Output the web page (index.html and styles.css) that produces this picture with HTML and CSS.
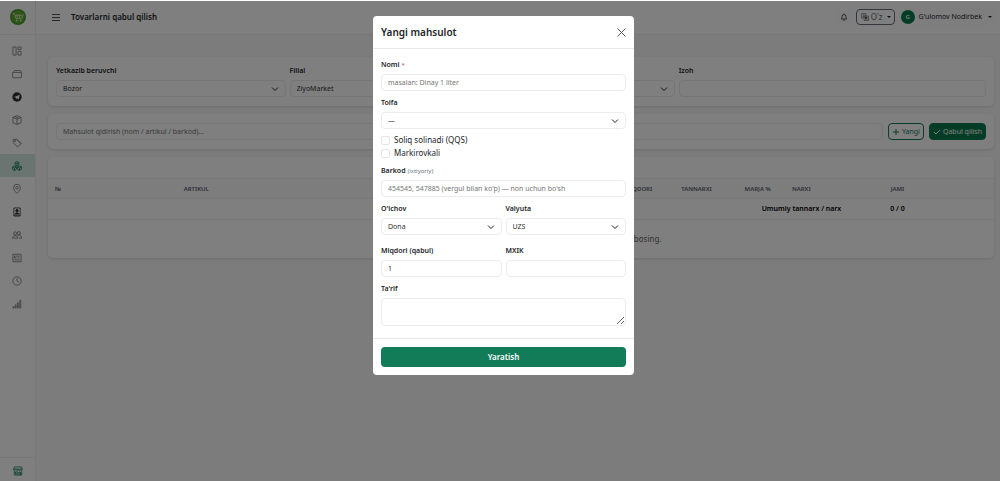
FILE: index.html
```html
<!DOCTYPE html>
<html lang="uz">
<head>
<meta charset="utf-8">
<meta name="viewport" content="width=device-width, initial-scale=1">
<title>Tovarlarni qabul qilish</title>
<link rel="stylesheet" href="styles.css">
</head>
<body>
<div class="app">
  <aside class="sidebar">
    <a class="logo" href="#" aria-label="ZiyoMarket">
      <svg viewBox="0 0 16 16"><circle cx="8" cy="8" r="8" fill="#4a9a28"/><circle cx="8" cy="8" r="6.400" fill="#62ad38"/><path d="M2.500 4.500h2l1.400 5h5.800l1.600-4.200M5.200 6.700h7M7.200 5v4M9.600 5v4" fill="none" stroke="#dcebb8" stroke-width=".8"/><circle cx="6.700" cy="11.500" r=".9" fill="#dcebb8"/><circle cx="10.700" cy="11.500" r=".9" fill="#dcebb8"/></svg>
    </a>
    <nav class="nav">
      <a href="#" aria-label="Boshqaruv"><svg viewBox="0 0 16 16"><path d="M1.500 1.500h5v13h-5zM9.500 1.500h5v4h-5zM9.500 8.500h5v6h-5z"/></svg></a>
      <a href="#" aria-label="Kassa"><svg viewBox="0 0 16 16"><path d="M1 5.500h14v7.500q0 1-1 1H2q-1 0-1-1zM2.500 5.500 4 2.500h9.500l1.500 3"/></svg></a>
      <a href="#" aria-label="Telegram" class="dark"><svg viewBox="0 0 16 16"><circle cx="8" cy="8" r="7.500" fill="currentColor" stroke="none"/><path d="m3.500 7.800 8.800-3.500-1.500 7.700-2.600-1.900-1.300 1.400-.4-2.400z" fill="#fff" stroke="none"/></svg></a>
      <a href="#" aria-label="Mahsulotlar"><svg viewBox="0 0 16 16"><path d="m8 1 6.500 2.700v8.600L8 15l-6.500-2.700V3.700zM1.500 3.700 8 6.500l6.500-2.800M8 6.500V15M4.700 2.400l6.500 2.800"/></svg></a>
      <a href="#" aria-label="Narxlar"><svg viewBox="0 0 16 16"><path d="M2 2h5.500l7 7-5.500 5.500-7-7zM7.500 2 15 9.500"/><circle cx="5" cy="5" r="1"/></svg></a>
      <a href="#" aria-label="Qabul qilish" class="active"><svg viewBox="0 0 16 16"><path d="m8 1 3 1.500v4L8 8 5 6.500v-4zM4 8l3 1.500v4L4 15l-3-1.500v-4zM12 8l3 1.500v4L12 15l-3-1.500v-4zM5 2.500 8 4l3-1.500M8 4v4M1 9.500 4 11l3-1.500M4 11v4M9 9.500l3 1.500 3-1.500M12 11v4"/></svg></a>
      <a href="#" aria-label="Filiallar"><svg viewBox="0 0 16 16"><path d="M8 15S2.500 10.500 2.500 6a5.500 5.500 0 0 1 11 0C13.500 10.500 8 15 8 15z"/><circle cx="8" cy="6" r="2"/></svg></a>
      <a href="#" aria-label="Xodimlar" class="dark"><svg viewBox="0 0 16 16"><path d="M3 1.500h10v13H3zM3 13h10"/><circle cx="8" cy="6" r="2" fill="currentColor"/><path d="M5 11q3-4 6 0z" fill="currentColor"/></svg></a>
      <a href="#" aria-label="Mijozlar"><svg viewBox="0 0 16 16"><circle cx="5" cy="5.500" r="2.500"/><circle cx="11" cy="5" r="2.500"/><path d="M.8 13q0-4 4.200-4t4.200 4zM9 8.500q6-1.500 6.300 4.500H11"/></svg></a>
      <a href="#" aria-label="Hisobotlar"><svg viewBox="0 0 16 16"><path d="M1.500 2h13v12h-13zM4 5h8M4 8h3M9 8h3M4 11h8M4 5v3"/></svg></a>
      <a href="#" aria-label="Tarix"><svg viewBox="0 0 16 16"><circle cx="8" cy="8" r="6.700"/><path d="M8 3.500V8l3 2"/></svg></a>
      <a href="#" aria-label="Statistika"><svg viewBox="0 0 16 16"><path d="M1.500 12.500h1.500v2H1.500zM5 9.500h1.500v5H5zM8.500 6h1.500v8.500H8.500zM12.500 2H14v12.500h-1.500z"/></svg></a>
    </nav>
    <div class="side-foot"><a href="#" aria-label="Do'kon"><svg viewBox="0 0 16 16"><path d="M2.500 1.500h11L15 5v1q-1.700 2-3.500 0Q9.700 8 8 6 6.300 8 4.500 6 2.700 8 1 6V5zM2 8v6.500h12V8M4 9.500h4v3H4zM10 14.500v-5h2v5M1 5h14"/></svg></a></div>
  </aside>

  <div class="page">
    <header class="topbar">
      <button class="menu-btn" type="button" aria-label="Menyu"><svg viewBox="0 0 8 8"><path d="M0 1.500h8M0 4.500h8M0 7.500h8" stroke="currentColor" fill="none" stroke-width=".8"/></svg></button>
      <h1>Tovarlarni qabul qilish</h1>
      <button class="bell" type="button" aria-label="Bildirishnomalar"><svg viewBox="0 0 16 16"><path d="M8 1v1.500M2.500 12c1.500-1.500 1.500-3 1.500-5a4 4 0 0 1 8 0c0 2 0 3.500 1.500 5zM6.500 14.500h3" fill="none" stroke="currentColor" stroke-width="1.500"/></svg></button>
      <button class="lang" type="button"><svg viewBox="0 0 16 16"><path d="M1 1h9v9H1zM6 6h9v9H6z" fill="#eee" stroke="currentColor" stroke-width="1.200"/><path d="M3 8l2.500-5L8 8M4 6.500h3" fill="none" stroke="currentColor"/><path d="M8 9h5M10.500 8v1q0 3-2.500 4M9 10l4 3" fill="none" stroke="#333" stroke-width="1.400"/></svg><span>O'z</span><i class="caret"></i></button>
      <button class="user" type="button"><span class="avatar">G</span><span>G'ulomov Nodirbek</span><i class="caret"></i></button>
    </header>

    <main class="content">
      <section class="card filters">
        <div class="field span3"><label for="supplier">Yetkazib beruvchi</label><select id="supplier"><option>Bozor</option></select></div>
        <div class="field span3"><label for="branch">Filial</label><select id="branch"><option>ZiyoMarket</option></select></div>
        <div class="field span2"><label for="currency">Valyuta</label><select id="currency"><option>UZS</option></select></div>
        <div class="field span4"><label for="note">Izoh</label><input id="note" type="text"></div>
      </section>
      <section class="card search">
        <input type="text" aria-label="Mahsulot qidirish" placeholder="Mahsulot qidirish (nom / artikul / barkod)...">
        <button class="btn outline" type="button"><svg viewBox="0 0 8 8"><path d="M4 1v6M1 4h6"/></svg>Yangi</button>
        <button class="btn solid" type="button"><svg viewBox="0 0 8 8"><path d="m1 4 2 2 4-4"/></svg>Qabul qilish</button>
      </section>
      <section class="card list">
        <table>
          <colgroup><col class="c-no"><col class="c-art"><col class="c-name"><col class="c-qty"><col class="c-cost"><col class="c-margin"><col class="c-price"><col class="c-sum"><col class="c-act"></colgroup>
          <thead><tr><th>№</th><th>Artikul</th><th>Nomi</th><th>Miqdori</th><th>Tannarxi</th><th>Marja %</th><th>Narxi</th><th class="mid">Jami</th><th></th></tr></thead>
          <tbody>
            <tr class="total"><td colspan="7">Umumiy tannarx / narx</td><td class="mid">0 / 0</td><td></td></tr>
            <tr class="empty"><td colspan="9">Mahsulot qo'shish uchun yuqoridan qidiring yoki “Yangi” tugmasini bosing.</td></tr>
          </tbody>
        </table>
      </section>
    </main>
  </div>
</div>

<div class="backdrop">
  <form class="modal" role="dialog" aria-modal="true" aria-labelledby="modal-title">
    <header class="modal-head">
      <h2 id="modal-title">Yangi mahsulot</h2>
      <button class="close" type="button" aria-label="Yopish"><svg viewBox="0 0 9 9"><path d="m.5.5 8 8M8.500.5l-8 8" stroke="currentColor" fill="none"/></svg></button>
    </header>
    <div class="modal-body">
      <div class="field"><label for="name">Nomi <span class="req">*</span></label><input id="name" type="text" placeholder="masalan: Dinay 1 liter"></div>
      <div class="field"><label for="category">Toifa</label><select id="category"><option>—</option></select></div>
      <div class="checks">
        <label><input type="checkbox">Soliq solinadi (QQS)</label>
        <label><input type="checkbox">Markirovkali</label>
      </div>
      <div class="field"><label for="barcode">Barkod <small>(ixtiyoriy)</small></label><input id="barcode" type="text" placeholder="454545, 547885 (vergul bilan ko'p) — non uchun bo'sh"></div>
      <div class="pair units">
        <div class="field"><label for="unit">O'lchov</label><select id="unit"><option>Dona</option></select></div>
        <div class="field"><label for="money">Valyuta</label><select id="money"><option>UZS</option></select></div>
      </div>
      <div class="pair">
        <div class="field"><label for="qty">Miqdori (qabul)</label><input id="qty" type="text" value="1"></div>
        <div class="field"><label for="mxik">MXIK</label><input id="mxik" type="text"></div>
      </div>
      <div class="field"><label for="desc">Ta'rif</label><textarea id="desc"></textarea></div>
    </div>
    <footer class="modal-foot"><button class="submit" type="button">Yaratish</button></footer>
  </form>
</div>
</body>
</html>
```
FILE: styles.css
```css
* { box-sizing: border-box; }
body { margin: 0; background: #f8f8f8; color: #212529; font: 7px/10px "Noto Sans", "Open Sans", sans-serif; }
button, input, select, textarea { font: inherit; color: inherit; margin: 0; }
button { cursor: pointer; }
svg { display: block; flex: none; }
h1, h2 { margin: 0; font-weight: 600; }

.app { display: flex; min-height: 100vh; }
.sidebar { display: flex; flex-direction: column; width: 36px; flex: none; background: #fff; border-right: 1px solid #eee; }
.logo { display: flex; align-items: center; justify-content: center; height: 35px; border-bottom: 1px solid #eee; }
.logo svg { width: 16px; height: 16px; }
.nav { padding-top: 4px; }
.nav a { display: flex; align-items: center; justify-content: center; height: 23px; padding-right: 2px; color: #777; }
.nav svg, .side-foot svg { width: 10px; height: 10px; fill: none; stroke: currentColor; stroke-width: 1.3; }
.nav .dark { color: #333; }
.nav .active { background: #d5ebe5; color: #147c58; }
.side-foot { display: flex; align-items: center; justify-content: center; height: 24px; margin-top: auto; padding-top: 2px; border-top: 1px solid #eee; }
.side-foot a { color: #147c58; }

.page { flex: 1; min-width: 0; }
.topbar { display: flex; align-items: center; height: 35px; padding: 0 4px 0 16px; background: #fff; border-bottom: 1px solid #eee; }
.topbar h1 { flex: 1; margin-left: 11px; font-size: 8px; line-height: 12px; }
.menu-btn { padding: 0; border: 0; background: none; }
.menu-btn svg { width: 8px; height: 8px; }
.bell { display: grid; place-items: center; width: 16px; height: 16px; padding: 0; border: 0; border-radius: 50%; background: #fcfcfc; }
.bell svg { width: 8px; height: 8px; }
.lang { display: flex; align-items: center; gap: 2px; height: 16px; margin: 0 4px; padding: 0 3px 0 4px; border: 1px solid #6a6f78; border-radius: 4px; background: #fff; color: #666a7a; font-size: 8px; }
.lang svg { width: 8px; height: 8px; }
.caret { margin-left: 2px; border: 2px solid transparent; border-top-color: #222; border-bottom: 0; }
.user { display: flex; align-items: center; gap: 4px; height: 18px; padding: 0 4px 0 2px; border: 0; border-radius: 9px; background: #fdfdfd; }
.avatar { display: grid; place-items: center; width: 14px; height: 14px; border-radius: 50%; background: #087b4b; color: #fff; font-size: 6px; font-weight: 600; }

.content { display: flex; flex-direction: column; gap: 8px; padding: 22px 6px 8px 12px; }
.card { background: #fff; border-radius: 5px; box-shadow: 0 1px 3px rgba(0, 0, 0, .12); }
.filters { display: grid; grid-template-columns: repeat(12, 1fr); column-gap: 4px; padding: 9px 8px; }
.span2 { grid-column: span 2; }
.span3 { grid-column: span 3; }
.span4 { grid-column: span 4; }
.field { display: flex; flex-direction: column; gap: 4px; min-width: 0; }
.field label { font-weight: 600; }
.field input, .field select, .field textarea, .search input { width: 100%; height: 17px; padding: 0 6px; border: 1px solid #ececec; border-radius: 4px; background: #fff; color: #333; outline: 0; }
.field select { appearance: none; padding-right: 16px; background: #fff url("data:image/svg+xml,%3Csvg xmlns='http://www.w3.org/2000/svg' viewBox='0 0 8 8'%3E%3Cpath d='m1 2.500 3 3 3-3' fill='none' stroke='%23222'/%3E%3C/svg%3E") no-repeat right 6px center / 8px 8px; }
::placeholder { color: #757575; opacity: 1; }
.search { display: flex; align-items: center; gap: 5px; padding: 9px 8px; }
.search input { flex: 1; min-width: 0; }
.btn { display: flex; align-items: center; gap: 2px; height: 17px; padding: 0 3px; border: 1px solid #147c58; border-radius: 4px; white-space: nowrap; }
.btn svg { width: 8px; height: 8px; fill: none; stroke: currentColor; }
.outline { background: #fff; color: #147c58; }
.solid { background: #087b4b; color: #fff; }

.list { padding-top: 21px; }
table { width: 100%; border-collapse: collapse; table-layout: fixed; }
.c-no { width: 13.6%; }
.c-art { width: 22%; }
.c-name { width: 24.6%; }
.c-qty { width: 6%; }
.c-cost { width: 6.7%; }
.c-margin { width: 5%; }
.c-price { width: 6.7%; }
.c-sum { width: 10.4%; }
.c-act { width: 5%; }
th, td { padding: 0 7px; text-align: left; border-top: 1px solid #efefef; }
th { height: 20px; background: #fbfbfb; color: #596070; font-size: 6px; font-weight: 600; text-transform: uppercase; white-space: nowrap; }
.total td { height: 21px; color: #000; font-weight: 600; text-align: right; }
th.mid, .total .mid { text-align: center; }
.empty td { height: 38px; color: #666; font-size: 8px; text-align: center; }

.backdrop { position: fixed; inset: 1px 0 0; display: flex; align-items: flex-start; justify-content: center; padding: 15px 0 0 7px; overflow: auto; background: rgba(0, 0, 0, .5); }
.modal { width: 261px; max-width: 100%; border-radius: 4px; background: #fff; }
.modal-head { display: flex; align-items: center; justify-content: space-between; padding: 8px; border-bottom: 1px solid #e9e9e9; }
.modal-head h2 { font-size: 10px; line-height: 16px; }
.close { padding: 0; border: 0; background: none; color: #555; }
.close svg { width: 9px; height: 9px; }
.modal-body { display: flex; flex-direction: column; gap: 7px; padding: 11px 8px 12px; }
.req, .field small { color: #6c757d; font-size: 6px; font-weight: 400; }
.req { color: #b05060; }
.checks { display: flex; flex-direction: column; gap: 1px; margin-top: -2px; }
.checks label { display: flex; align-items: center; gap: 4px; font-size: 8px; line-height: 12px; }
.checks input { appearance: none; width: 9px; height: 9px; border: 1px solid #e6e6e6; border-radius: 2px; background: #fff; }
.pair { display: grid; grid-template-columns: 1fr 1fr; gap: 4px; }
.units { margin-bottom: 4px; }
.field textarea { display: block; height: 28px; padding: 4px 6px; resize: vertical; }
.modal-foot { padding: 8px; border-top: 1px solid #f0e3e3; }
.submit { display: block; width: 100%; height: 20px; padding: 0; border: 0; border-radius: 4px; background: #127c59; color: #fff; font-size: 8px; font-weight: 600; }
```
